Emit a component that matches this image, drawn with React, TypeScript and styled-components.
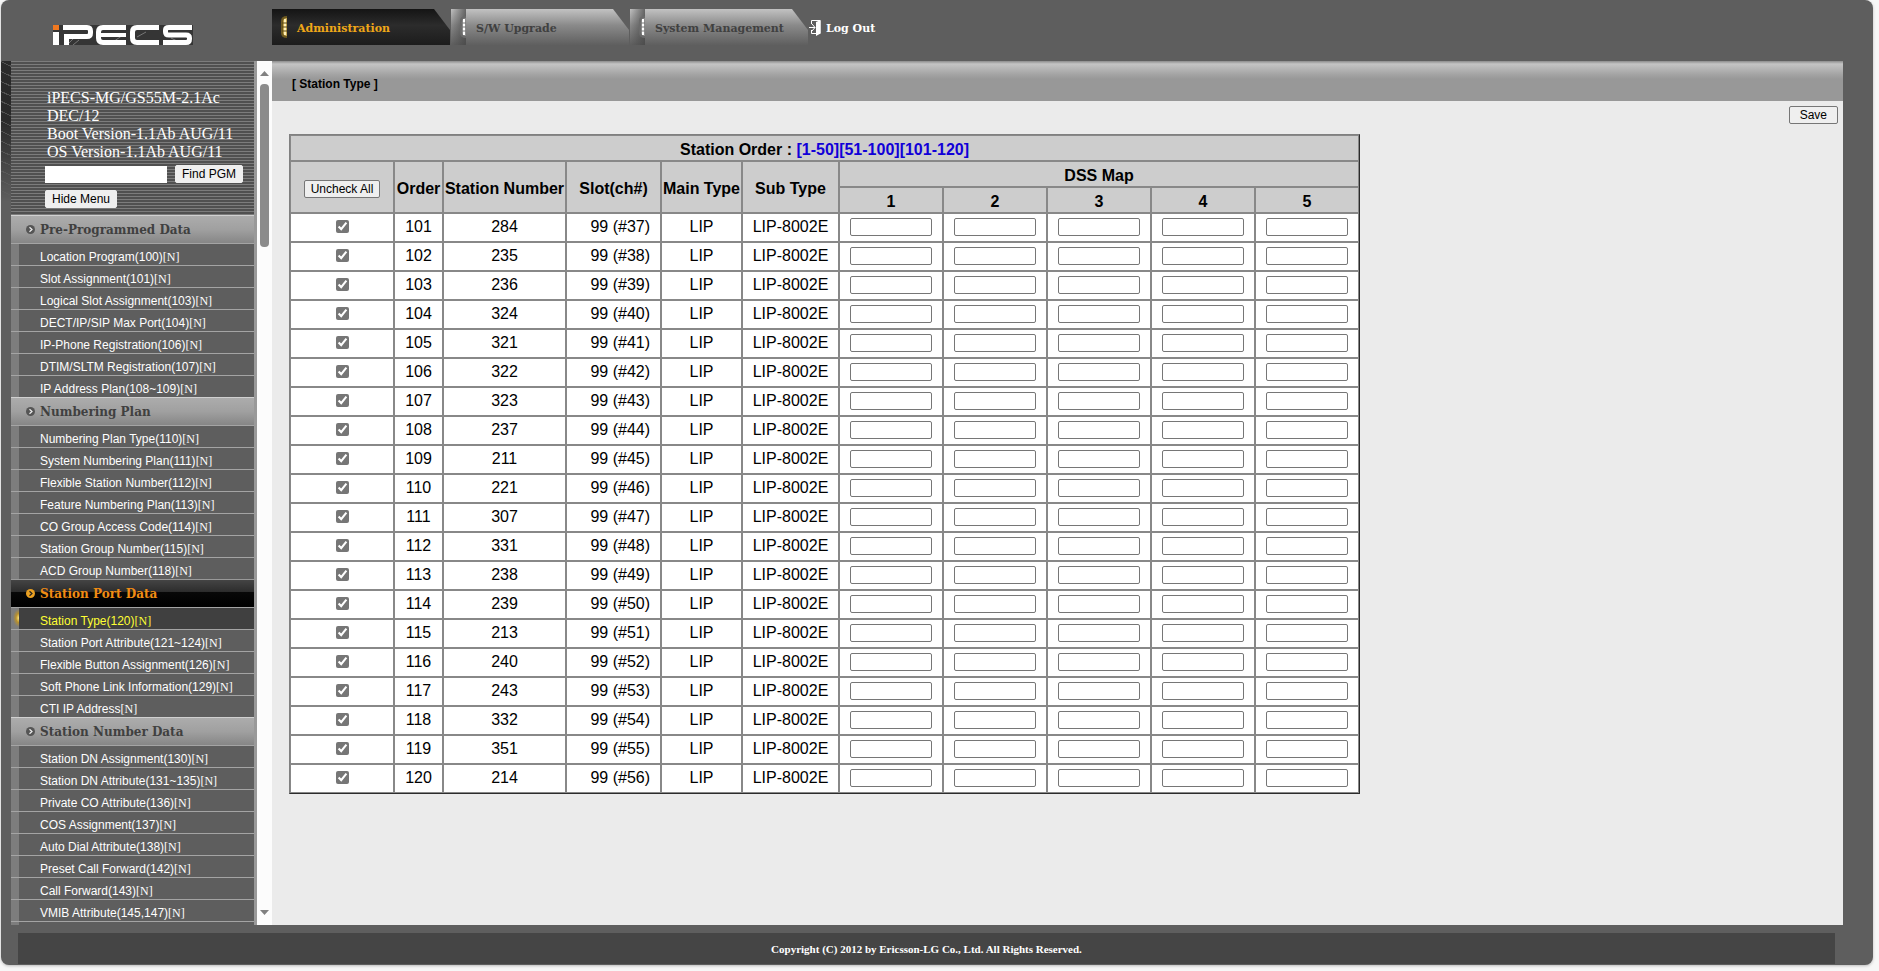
import React from "react";
import styled, { createGlobalStyle, css } from "styled-components";

const Global = createGlobalStyle`
  *, *::before, *::after { box-sizing: border-box; }
  body {
    margin: 0;
    background: #f7f7f7;
    font-family: "Liberation Sans", Arial, sans-serif;
    color: #000;
  }
`;

const bookman = `"DejaVu Serif", "Bookman Old Style", serif`;
const times = `"Liberation Serif", "Times New Roman", serif`;

const Frame = styled.div`
  display: flex;
  flex-direction: column;
  height: calc(100vh - 6px);
  margin: 0 6px 6px 1px;
  background: #5e5e5e;
  border-radius: 8px;
  overflow: hidden;
  box-shadow: 0 1px 3px #bbb;
`;

const Header = styled.header`
  display: flex;
  flex: none;
  height: 61px;
`;

const LogoLink = styled.a`
  flex: none;
  width: 271px;
  padding: 25px 0 0 52px;
  svg { display: block; }
`;

const TabBar = styled.nav`
  display: flex;
  align-items: flex-start;
  gap: 1px;
  padding-top: 9px;
`;

const Tab = styled.a<{ $active?: boolean }>`
  display: flex;
  align-items: center;
  width: 178px;
  height: 36px;
  clip-path: polygon(0 0, 162px 0, 100% 21px, 100% 100%, 0 100%);
  background: ${(p) =>
    p.$active
      ? "linear-gradient(#141414, #2c2c2c 45%, #1c1c1c)"
      : "linear-gradient(#c2c2c2, #8a8a8a 45%, #5f5f5f)"};
  color: ${(p) => (p.$active ? "#f0a818" : "#404040")};
  font: bold 11px/16px ${bookman};
  text-decoration: none;
  white-space: nowrap;
`;

const TabLabel = styled.span`
  padding-top: 4px;
`;

const TabMark = styled.span<{ $active?: boolean }>`
  display: flex;
  align-items: center;
  justify-content: flex-end;
  width: 15px;
  height: 36px;
  margin-right: 10px;
  background: ${(p) =>
    p.$active
      ? "none"
      : "linear-gradient(90deg, rgba(80,80,80,0), rgba(70,70,70,.75))"};
`;

const LogOut = styled.a`
  display: flex;
  align-items: center;
  gap: 5px;
  height: 36px;
  color: #fff;
  font: bold 11px/16px ${bookman};
  text-decoration: none;
  white-space: nowrap;
`;

const Body = styled.div`
  display: flex;
  flex: 1;
  min-height: 0;
  padding-right: 30px;
`;

const Edge = styled.div`
  flex: none;
  width: 10px;
  background:
    repeating-linear-gradient(25deg, transparent 0 8px, rgba(120,120,120,.5) 8px 9px),
    #2a2a2a;
  mask-image: linear-gradient(#000 0, #000 60px, transparent 140px);
`;

const Sidebar = styled.aside`
  flex: none;
  width: 246px;
  border-right: 3px solid #999;
  background: #5e5e5e;
  overflow: hidden;
`;

const Info = styled.div`
  height: 154px;
  padding: 28px 6px 0 34px;
  background: repeating-linear-gradient(#7c7c7c 0 1px, #505050 1px 3px);
`;

const Version = styled.p`
  margin: 0 0 4px;
  padding-left: 2px;
  color: #fff;
  font: 16px/18px ${times};
`;

const Finder = styled.form`
  display: flex;
  flex-wrap: wrap;
  align-items: center;
  gap: 7px 8px;
`;

const FindInput = styled.input`
  width: 122px;
  height: 17px;
  padding: 0 2px;
  border: 0;
  background: #fff;
`;

const Button = styled.button<{ $flat?: boolean; $wide?: boolean }>`
  height: 18px;
  padding: 0 ${(p) => (p.$wide ? 10 : 6)}px;
  border: 1px solid ${(p) => (p.$flat ? "#efefef" : "#767676")};
  border-radius: 2px;
  background: #efefef;
  color: #000;
  font: 12px/16px "Liberation Sans", Arial, sans-serif;
  white-space: nowrap;
`;

const GroupTitle = styled.h2<{ $active?: boolean }>`
  display: flex;
  align-items: center;
  gap: 5px;
  height: 28px;
  margin: 0;
  padding: 0 0 0 15px;
  border-top: 1px solid #d0d0d0;
  background: linear-gradient(#acacac, #a0a0a0 50%, #868686);
  color: #404040;
  font: bold 12px/16px ${bookman};
  white-space: nowrap;
  ${(p) =>
    p.$active &&
    css`
      border-top-color: #999;
      background: linear-gradient(#444, #2c2c2c 45%, #080808 46%, #000);
      color: #f08c14;
    `}
`;

const ItemList = styled.ul`
  margin: 0;
  padding: 0;
  list-style: none;
`;

const Item = styled.li<{ $active?: boolean }>`
  height: 22px;
  padding: 5px 0 0 29px;
  border-top: 1px solid #a4a4a4;
  background: ${(p) =>
    p.$active
      ? `radial-gradient(ellipse 6px 9px at 8px 10px, #ffe880, #b8902c 50%, transparent) 0 0 / 8px 100% no-repeat,
         linear-gradient(90deg, #7d7d7d 8px, #404040 8px)`
      : "linear-gradient(90deg, #7d7d7d 8px, #5e5e5e 8px)"};
  a {
    display: block;
    color: ${(p) => (p.$active ? "#ff3" : "#fff")};
    font-size: 12px;
    line-height: 16px;
    text-decoration: none;
    white-space: nowrap;
  }
  span { font-family: ${times}; }
`;

const ScrollTrack = styled.div`
  display: flex;
  flex-direction: column;
  align-items: center;
  flex: none;
  width: 15px;
  padding: 10px 0;
  background: #fcfcfc;
  svg { display: block; flex: none; }
`;

const ScrollThumb = styled.div`
  width: 9px;
  height: 163px;
  margin: 8px 0 auto;
  border-radius: 4px;
  background: #8b8b8b;
`;

const Main = styled.main`
  flex: 1;
  min-width: 0;
  background: #ebebeb;
`;

const TitleBar = styled.h1`
  display: flex;
  align-items: center;
  height: 40px;
  margin: 0;
  padding: 6px 0 0 20px;
  background: linear-gradient(#8c8c8c, #c4c4c4 3px, #a2a2a2 14px, #989898 18px, #989898);
  font-size: 12px;
  line-height: 16px;
`;

const Actions = styled.div`
  display: flex;
  justify-content: flex-end;
  padding: 5px 5px 10px;
`;

const Grid = styled.table`
  width: 1071px;
  margin-left: 17px;
  border: 1px solid #808080;
  border-right-color: #2c2c2c;
  border-bottom-color: #2c2c2c;
  border-spacing: 0;
  table-layout: fixed;
  font-size: 16px;
  line-height: 18px;
  text-align: center;
`;

const Cell = styled.td<{ $slot?: boolean }>`
  height: 29px;
  padding: ${(p) => (p.$slot ? "0 10px 2px 0" : "0 0 2px")};
  border: 1px solid #888;
  background: #fff;
  text-align: ${(p) => (p.$slot ? "right" : "center")};
  white-space: nowrap;
`;

const ControlCell = styled(Cell)`
  padding: 0 0 2px;
  input { display: block; margin: 0 auto; }
`;

const Head = styled.th`
  height: 26px;
  padding: 3px 0 0;
  border: 1px solid #888;
  background: #cdcdcd;
  font-weight: bold;
  white-space: nowrap;
  a { color: #1100d8; text-decoration: none; }
`;

const Check = styled.input`
  width: 13px;
  height: 13px;
  accent-color: #767676;
`;

const MapInput = styled.input`
  width: 82px;
  height: 18px;
  padding: 0 2px;
  border: 1px solid #767676;
  border-radius: 2px;
  background: #fff;
`;

const Footer = styled.footer`
  flex: none;
  height: 31px;
  margin: 8px 38px 1px 17px;
  padding-top: 1px;
  background: #454545;
  color: #fff;
  font: bold 11px/30px ${times};
  text-align: center;
`;

const Logo = () => (
  <svg width="140" height="20" viewBox="0 0 140 20" role="img" aria-label="iPECS">
    <rect width="140" height="20" fill="#353535" />
    <path d="M14 20l8-8M20 20l6-5M60 17l10-7M84 12l9-5M118 13l6 3" stroke="#777" />
    <rect width="6" height="5" fill="#f07820" />
    <rect y="7" width="6" height="13" fill="#fff" />
    <g fill="none" stroke="#fff" strokeWidth="5">
      <path d="M10 2.500H34Q37.500 2.500 37.500 6V8Q37.500 11.500 34 11.500H13.500V20" />
      <path d="M73 2.500H50Q45.500 2.500 45.500 7V13Q45.500 17.500 50 17.500H73" />
      <path d="M45 10H73" strokeWidth="4" />
      <path d="M106 2.500H84Q79.500 2.500 79.500 7V13Q79.500 17.500 84 17.500H106" />
      <path d="M139 2.500H116Q112.500 2.500 112.500 5V7Q112.500 10 116 10H133Q136.500 10 136.500 13V14Q136.500 17.500 133 17.500H110" />
    </g>
  </svg>
);

const Mark = ({ active }: { active?: boolean }) => (
  <svg width="7" height="24" viewBox="0 0 7 24" aria-hidden="true">
    <path d="M7 1Q1 1 1 6V18Q1 23 7 23" fill={active ? "#6e5a20" : "#6a6a6a"} />
    <path d="M7 3Q3 3 3 7V17Q3 21 7 21" fill={active ? "#c8a850" : "#8c8c8c"} />
    <path d="M5 4V20" stroke={active ? "#fff0b8" : "#fff"} strokeWidth="2" />
    <path d="M2 8H7M2 12H7M2 16H7" stroke={active ? "#5a4814" : "#777"} />
  </svg>
);

const Bullet = ({ active }: { active?: boolean }) => (
  <svg width="9" height="9" viewBox="0 0 9 9" aria-hidden="true">
    <circle cx="4.500" cy="4.500" r="4.500" fill={active ? "#eaa022" : "#555"} />
    <path d="M3.500 2.200L6 4.500L3.500 6.800" fill="none" stroke={active ? "#222" : "#eee"} strokeWidth="1.200" />
  </svg>
);

const Door = () => (
  <svg width="12" height="17" viewBox="0 0 12 17" aria-hidden="true">
    <path d="M2.500 5V1.500H11V14.500H2.500V11" fill="none" stroke="#fff" />
    <path d="M11.500 1L7 3V17L11.500 14.500Z" fill="#fff" />
    <path d="M0 8.500H6M3 5L6 8.500L3 12" fill="none" stroke="#fff" />
  </svg>
);

const Arrow = ({ down }: { down?: boolean }) => (
  <svg width="9" height="5" viewBox="0 0 9 5" aria-hidden="true">
    <path d={down ? "M0 0H9L4.500 5Z" : "M0 5H9L4.500 0Z"} fill="#808080" />
  </svg>
);

const groups = [
  {
    title: "Pre-Programmed Data",
    items: ["Location Program(100)", "Slot Assignment(101)", "Logical Slot Assignment(103)", "DECT/IP/SIP Max Port(104)", "IP-Phone Registration(106)", "DTIM/SLTM Registration(107)", "IP Address Plan(108~109)"],
  },
  {
    title: "Numbering Plan",
    items: ["Numbering Plan Type(110)", "System Numbering Plan(111)", "Flexible Station Number(112)", "Feature Numbering Plan(113)", "CO Group Access Code(114)", "Station Group Number(115)", "ACD Group Number(118)"],
  },
  {
    title: "Station Port Data",
    active: true,
    items: ["Station Type(120)", "Station Port Attribute(121~124)", "Flexible Button Assignment(126)", "Soft Phone Link Information(129)", "CTI IP Address"],
  },
  {
    title: "Station Number Data",
    items: ["Station DN Assignment(130)", "Station DN Attribute(131~135)", "Private CO Attribute(136)", "COS Assignment(137)", "Auto Dial Attribute(138)", "Preset Call Forward(142)", "Call Forward(143)", "VMIB Attribute(145,147)", ""],
  },
];

const stations = [284, 235, 236, 324, 321, 322, 323, 237, 211, 221, 307, 331, 238, 239, 213, 240, 243, 332, 351, 214];
const columnWidths = [104, 49, 123, 95, 81, 97, 104, 104, 104, 104, 104];
const maps = [1, 2, 3, 4, 5];
const tabs = [
  { label: "Administration", href: "#admin", active: true },
  { label: "S/W Upgrade", href: "#upgrade" },
  { label: "System Management", href: "#system" },
];

export default function App() {
  return (
    <>
      <Global />
      <Frame>
        <Header>
          <LogoLink href="#home"><Logo /></LogoLink>
          <TabBar>
            {tabs.map((t) => (
              <Tab key={t.href} href={t.href} $active={t.active}>
                <TabMark $active={t.active}><Mark active={t.active} /></TabMark>
                <TabLabel>{t.label}</TabLabel>
              </Tab>
            ))}
            <LogOut href="#logout"><Door /><TabLabel>Log Out</TabLabel></LogOut>
          </TabBar>
        </Header>
        <Body>
          <Edge />
          <Sidebar>
            <Info>
              <Version>
                iPECS-MG/GS55M-2.1Ac<br />DEC/12<br />Boot Version-1.1Ab AUG/11<br />OS Version-1.1Ab AUG/11
              </Version>
              <Finder onSubmit={(e) => e.preventDefault()}>
                <FindInput type="text" aria-label="Program number" />
                <Button type="submit" $flat>Find PGM</Button>
                <Button type="button" $flat>Hide Menu</Button>
              </Finder>
            </Info>
            <nav>
              {groups.map((g) => (
                <React.Fragment key={g.title}>
                  <GroupTitle $active={g.active}><Bullet active={g.active} />{g.title}</GroupTitle>
                  <ItemList>
                    {g.items.map((label, i) => (
                      <Item key={label} $active={g.active && i === 0}>
                        {label && <a href="#program">{label}<span>[N]</span></a>}
                      </Item>
                    ))}
                  </ItemList>
                </React.Fragment>
              ))}
            </nav>
          </Sidebar>
          <ScrollTrack>
            <Arrow />
            <ScrollThumb />
            <Arrow down />
          </ScrollTrack>
          <Main>
            <TitleBar>[ Station Type ]</TitleBar>
            <Actions><Button type="button" $wide>Save</Button></Actions>
            <Grid>
              <colgroup>
                {columnWidths.map((w, i) => <col key={i} width={w} />)}
              </colgroup>
              <thead>
                <tr>
                  <Head colSpan={11}>
                    Station Order : <a href="#1-50">[1-50]</a><a href="#51-100">[51-100]</a><a href="#101-120">[101-120]</a>
                  </Head>
                </tr>
                <tr>
                  <Head rowSpan={2}><Button type="button">Uncheck All</Button></Head>
                  <Head rowSpan={2}>Order</Head>
                  <Head rowSpan={2}>Station Number</Head>
                  <Head rowSpan={2}>Slot(ch#)</Head>
                  <Head rowSpan={2}>Main Type</Head>
                  <Head rowSpan={2}>Sub Type</Head>
                  <Head colSpan={5}>DSS Map</Head>
                </tr>
                <tr>{maps.map((m) => <Head key={m}>{m}</Head>)}</tr>
              </thead>
              <tbody>
                {stations.map((station, i) => (
                  <tr key={station}>
                    <ControlCell><Check type="checkbox" defaultChecked aria-label={`Order ${101 + i}`} /></ControlCell>
                    <Cell>{101 + i}</Cell>
                    <Cell>{station}</Cell>
                    <Cell $slot>99 (#{37 + i})</Cell>
                    <Cell>LIP</Cell>
                    <Cell>LIP-8002E</Cell>
                    {maps.map((m) => (
                      <ControlCell key={m}><MapInput type="text" aria-label={`DSS Map ${m}, order ${101 + i}`} /></ControlCell>
                    ))}
                  </tr>
                ))}
              </tbody>
            </Grid>
          </Main>
        </Body>
        <Footer>Copyright (C) 2012 by Ericsson-LG Co., Ltd. All Rights Reserved.</Footer>
      </Frame>
    </>
  );
}
